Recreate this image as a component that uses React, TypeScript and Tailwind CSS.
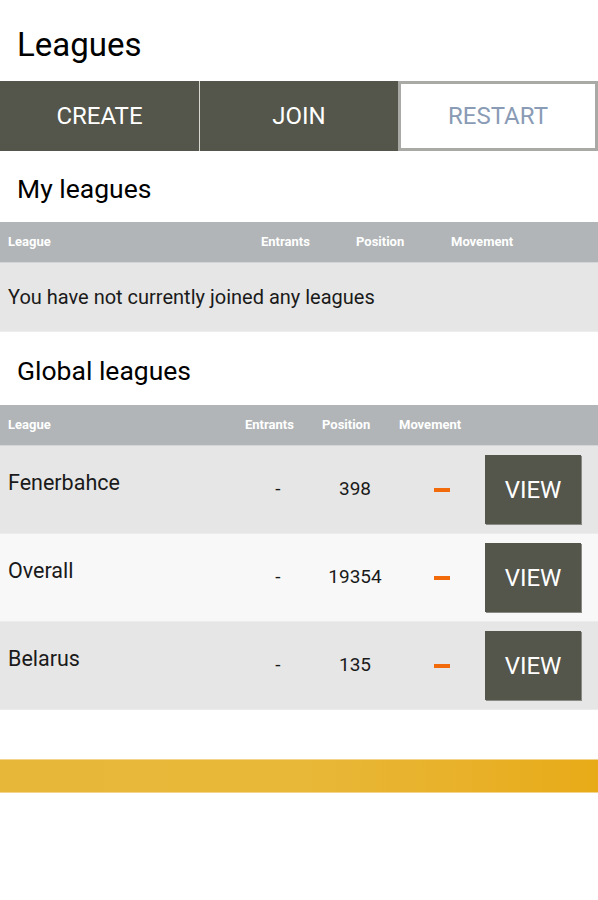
import React from "react";

const leagues = [
  { name: "Fenerbahce", entrants: "-", position: "398", bg: "bg-[#e6e6e6]" },
  { name: "Overall", entrants: "-", position: "19354", bg: "bg-[#f8f8f8]" },
  { name: "Belarus", entrants: "-", position: "135", bg: "bg-[#e6e6e6]" },
];

const App = () => {
  return (
    <div className="w-[598px] min-h-[900px] bg-white font-['Roboto','Liberation_Sans',sans-serif] text-[#1a1a1a]">
      <div className="h-[81px] flex items-center pl-[17px] pt-[8px]">
        <h1 className="text-[33px] leading-none text-black">Leagues</h1>
      </div>

      <div className="flex h-[70px]">
        <button className="w-[200px] bg-[#54554b] text-white text-[24px] border-r border-[#d8d8d0]">
          CREATE
        </button>
        <button className="w-[198px] bg-[#54554b] text-white text-[24px]">
          JOIN
        </button>
        <button className="flex-1 bg-white border-[3px] border-[#a9aaa5] text-[#8a9bb6] text-[24px]">
          RESTART
        </button>
      </div>

      <div className="h-[71px] flex items-center pl-[17px] pt-[6px]">
        <h2 className="text-[26.5px] leading-none text-black">My leagues</h2>
      </div>

      <div className="h-[41px] flex items-center bg-[#b1b5b7] border-b border-[#d3d6d7] text-white text-[13px] font-bold">
        <div className="w-[261px] pl-[8px]">League</div>
        <div className="w-[95px]">Entrants</div>
        <div className="w-[95px]">Position</div>
        <div>Movement</div>
      </div>
      <div className="h-[69px] flex items-center pl-[8px] bg-[#e6e6e6] border-b border-[#ededed] text-[20px] text-[#1a1a1a]">
        You have not currently joined any leagues
      </div>

      <div className="h-[73px] flex items-center pl-[17px] pt-[6px]">
        <h2 className="text-[26.5px] leading-none text-black">Global leagues</h2>
      </div>

      <div className="h-[41px] flex items-center bg-[#b1b5b7] border-b border-[#d3d6d7] text-white text-[13px] font-bold">
        <div className="w-[245px] pl-[8px]">League</div>
        <div className="w-[77px]">Entrants</div>
        <div className="w-[77px]">Position</div>
        <div>Movement</div>
      </div>

      {leagues.map((l) => (
        <div
          key={l.name}
          className={`h-[88px] flex ${l.bg} border-b border-[#ececec]`}
        >
          <div className="w-[250px] pl-[8px] pt-[24px] text-[21.5px] leading-[26px]">
            {l.name}
          </div>
          <div className="w-[56px] flex items-center justify-center text-[19px]">
            {l.entrants}
          </div>
          <div className="w-[98px] flex items-center justify-center text-[19px]">
            {l.position}
          </div>
          <div className="w-[76px] flex items-center justify-center">
            <span className="block w-[16px] h-[4px] bg-[#f26a0a]"></span>
          </div>
          <div className="flex items-center pl-[5px]">
            <button className="w-[96px] h-[69px] bg-[#54554b] text-white text-[24px] shadow-[1px_1px_0_#8a8a84]">
              VIEW
            </button>
          </div>
        </div>
      ))}

      <div className="h-[49px]"></div>

      <div className="h-[34px] bg-gradient-to-r from-[#e7b73a] via-[#e8b838] to-[#e8ab17] border-y border-[#f3d48c]"></div>
    </div>
  );
};

export default App;
